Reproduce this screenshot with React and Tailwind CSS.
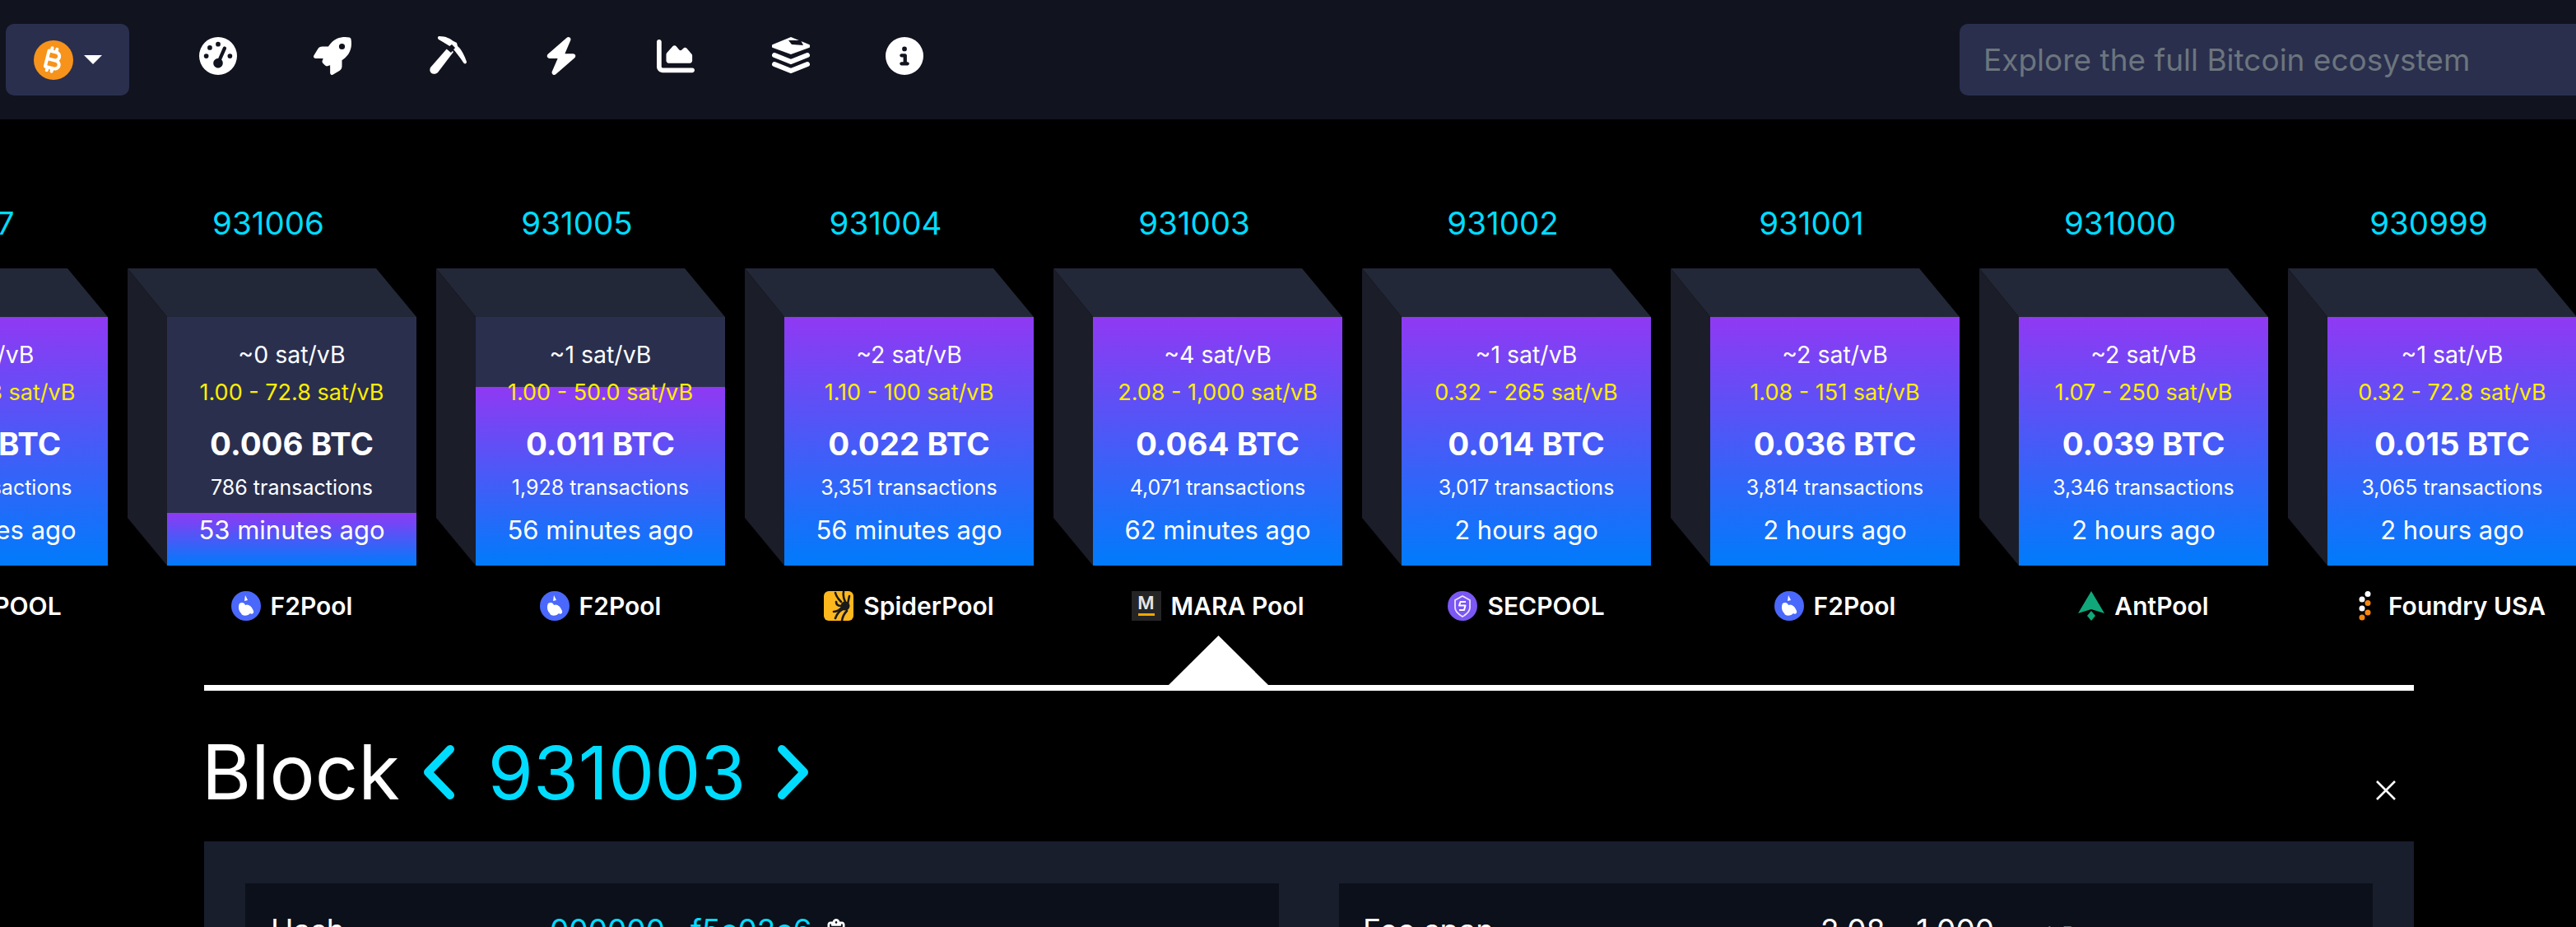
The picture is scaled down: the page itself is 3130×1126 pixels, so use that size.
import React from "react";
import { FaGaugeHigh, FaRocket, FaBolt, FaChartArea, FaCircleInfo, FaBitcoinSign, FaRegClipboard } from "react-icons/fa6";

const blocks = [
  { height: 931007, fee: "~1 sat/vB", span: "1.00 - 72.8 sat/vB", btc: "0.031 BTC", txs: "2,514 transactions", time: "50 minutes ago", pool: "SECPOOL", fill: 302 },
  { height: 931006, fee: "~0 sat/vB", span: "1.00 - 72.8 sat/vB", btc: "0.006 BTC", txs: "786 transactions", time: "53 minutes ago", pool: "F2Pool", fill: 64 },
  { height: 931005, fee: "~1 sat/vB", span: "1.00 - 50.0 sat/vB", btc: "0.011 BTC", txs: "1,928 transactions", time: "56 minutes ago", pool: "F2Pool", fill: 217 },
  { height: 931004, fee: "~2 sat/vB", span: "1.10 - 100 sat/vB", btc: "0.022 BTC", txs: "3,351 transactions", time: "56 minutes ago", pool: "SpiderPool", fill: 302 },
  { height: 931003, fee: "~4 sat/vB", span: "2.08 - 1,000 sat/vB", btc: "0.064 BTC", txs: "4,071 transactions", time: "62 minutes ago", pool: "MARA Pool", fill: 302 },
  { height: 931002, fee: "~1 sat/vB", span: "0.32 - 265 sat/vB", btc: "0.014 BTC", txs: "3,017 transactions", time: "2 hours ago", pool: "SECPOOL", fill: 302 },
  { height: 931001, fee: "~2 sat/vB", span: "1.08 - 151 sat/vB", btc: "0.036 BTC", txs: "3,814 transactions", time: "2 hours ago", pool: "F2Pool", fill: 302 },
  { height: 931000, fee: "~2 sat/vB", span: "1.07 - 250 sat/vB", btc: "0.039 BTC", txs: "3,346 transactions", time: "2 hours ago", pool: "AntPool", fill: 302 },
  { height: 930999, fee: "~1 sat/vB", span: "0.32 - 72.8 sat/vB", btc: "0.015 BTC", txs: "3,065 transactions", time: "2 hours ago", pool: "Foundry USA", fill: 302 },
];

function PickaxeIcon() {
  return (
    <svg width="48" height="47" viewBox="0 0 48 47" fill="white">
      <path d="M15 0C23 0 28 3 32 6L36 8L37 12C42 16 46 25 48 31C48 34 45 34 44 32C40 26 35 19 30 14C25 10 19 7 14 4C12 2 13 0 15 0Z" />
      <path d="M4 38L25 14L32 19L13 44C9 48 1 45 4 38Z" />
      <path d="M23 15L30 10L34 14L29 20Z" fill="#11131f" />
    </svg>
  );
}

function LayersIcon() {
  return (
    <svg width="46" height="46" viewBox="0 0 46 46" fill="none">
      <path d="M23 0L45 9C47 10 47 12 45 13L23 21L1 13C-1 12 -1 10 1 9Z" fill="white" />
      <path d="M20 4L35 4L38 10L24 9Z" fill="#11131f" />
      <path d="M3 22L23 30L43 22" stroke="white" strokeWidth="6" strokeLinecap="round" strokeLinejoin="round" />
      <path d="M3 33L23 41L43 33" stroke="white" strokeWidth="6" strokeLinecap="round" strokeLinejoin="round" />
    </svg>
  );
}

function PoolLogo({ name }) {
  if (name === "F2Pool") {
    return (
      <svg width="36" height="36" viewBox="0 0 36 36">
        <circle cx="18" cy="18" r="18" fill="#4a68fb" />
        <path d="M17 5L20 11L16 12Z" fill="white" />
        <path d="M10 15C13 13 16 14 17 17C20 15 25 18 27 24C28 27 25 29 23 27C21 30 13 31 12 27C9 24 8 19 10 15Z" fill="white" />
      </svg>
    );
  }
  if (name === "SpiderPool") {
    return (
      <svg width="36" height="36" viewBox="0 0 36 36" fill="none">
        <rect width="36" height="36" rx="6" fill="#fdb81e" />
        <g stroke="#1a1a1a" strokeWidth="2.6" strokeLinecap="round">
          <path d="M14 2C15 7 18 10 21 13" />
          <path d="M24 1C23 6 24 9 26 13" />
          <path d="M31 6C30 10 30 12 29 15" />
          <path d="M15 13C15 16 17 18 21 18" />
          <path d="M14 33C16 27 19 24 23 22" />
          <path d="M22 36C23 30 25 27 28 24" />
          <path d="M12 25C16 25 19 23 22 20" />
        </g>
        <circle cx="26" cy="18" r="5.5" fill="#1a1a1a" />
      </svg>
    );
  }
  if (name === "MARA Pool") {
    return (
      <div className="flex flex-col items-center w-[36px] h-[36px] bg-[#252525]">
        <span className="text-[22px] leading-[26px] font-semibold text-[#e6e6e6] mt-[1px]">M</span>
        <div className="w-[20px] h-[3px] bg-[#f7a600]" />
      </div>
    );
  }
  if (name === "SECPOOL") {
    return (
      <svg width="36" height="36" viewBox="0 0 36 36" fill="none">
        <circle cx="18" cy="18" r="18" fill="#7b57f5" />
        <path d="M18 6L27 11V20C27 25 23 28 18 31C13 28 9 25 9 20V11Z" stroke="white" strokeWidth="1.8" strokeOpacity="0.85" />
        <path d="M22 13H15.5L14 17.5H21.5L20 23H14" stroke="white" strokeWidth="2" strokeLinejoin="round" />
      </svg>
    );
  }
  if (name === "AntPool") {
    return (
      <svg width="32" height="36" viewBox="0 0 32 36">
        <path d="M16 0L32 27L16 22L0 27Z" fill="#10a87a" />
        <path d="M16 24L21 30L16 36L11 30Z" fill="#10a87a" />
      </svg>
    );
  }
  return (
    <svg width="16" height="36" viewBox="0 0 16 36" className="mr-[8px]">
      <circle cx="11" cy="3.5" r="3.5" fill="white" />
      <circle cx="4" cy="10" r="3.5" fill="white" />
      <circle cx="11" cy="14.5" r="3.5" fill="#f7860f" />
      <circle cx="4" cy="21" r="3.5" fill="white" />
      <circle cx="11" cy="26" r="3.5" fill="#f7860f" />
      <circle cx="4" cy="32" r="3.5" fill="#f7860f" />
    </svg>
  );
}

function Cube({ block }) {
  return (
    <div className="relative w-[351px] h-[361px]">
      <div className="h-[59px] bg-[#232838] [clip-path:polygon(0_0,302px_0,351px_59px,48px_59px)]" />
      <div className="absolute left-0 top-0 w-[48px] h-[361px] bg-[#1b1d29] [clip-path:polygon(0_0,48px_59px,48px_361px,0_303px)]" />
      <div className="relative ml-[48px] w-[303px] h-[302px] bg-[#2a2f4e] overflow-hidden">
        <div
          className="absolute inset-x-0 bottom-0 bg-[linear-gradient(#9039f3,#007bfb)]"
          style={{ height: block.fill }}
        />
        <div className="relative flex flex-col items-center text-white whitespace-nowrap">
          <div className="mt-[26px] h-[40px] leading-[40px] text-[28.5px]">{block.fee}</div>
          <div className="mt-[6px] h-[40px] leading-[40px] text-[27px] text-[#ffee00]">{block.span}</div>
          <div className="mt-[22px] h-[40px] leading-[40px] text-[38.5px] font-bold">{block.btc}</div>
          <div className="mt-[13px] h-[40px] leading-[40px] text-[25px]">{block.txs}</div>
          <div className="mt-[12px] h-[40px] leading-[40px] text-[31px]">{block.time}</div>
        </div>
      </div>
    </div>
  );
}

function BlockColumn({ block }) {
  return (
    <div className="shrink-0 w-[351px]">
      <div className="h-[50px] leading-[50px] pr-[9px] text-center text-[38.5px] text-[#00dcff]">{block.height}</div>
      <div className="mt-[30px]">
        <Cube block={block} />
      </div>
      <div className="mt-[31px] ml-[48px] h-[36px] flex items-center justify-center gap-[12px]">
        <PoolLogo name={block.pool} />
        <span className="text-[30px] font-semibold text-white whitespace-nowrap">{block.pool}</span>
      </div>
    </div>
  );
}

function Chevron({ flip }) {
  return (
    <svg width="39" height="66" viewBox="0 0 39 66" fill="none" className={flip ? "rotate-180" : ""}>
      <path d="M33 5L6 33L33 61" stroke="#00dcff" strokeWidth="10" strokeLinecap="round" strokeLinejoin="round" />
    </svg>
  );
}

export default function App() {
  const navIcons = [
    <FaGaugeHigh size={46} />,
    <FaRocket size={46} />,
    <PickaxeIcon />,
    <FaBolt size={46} />,
    <FaChartArea size={46} />,
    <div className="ml-[3px]"><LayersIcon /></div>,
    <FaCircleInfo size={46} />,
  ];

  return (
    <div className="w-[3130px] h-[1126px] overflow-hidden bg-black text-white font-['Inter',sans-serif]">
      <header className="h-[145px] bg-[#11131f] flex items-center pl-[7px]">
        <div className="w-[150px] h-[87px] rounded-[10px] bg-[#2a2f4e] flex items-center pl-[34px] gap-[13px]">
          <div className="w-[48px] h-[48px] rounded-full bg-[#f7931a] flex items-center justify-center">
            <FaBitcoinSign size={32} className="rotate-[14deg] text-white" />
          </div>
          <div className="w-[22px] h-[11px] bg-white [clip-path:polygon(0_0,100%_0,50%_100%)]" />
        </div>
        <nav className="flex ml-[38px] mb-[10px] text-white">
          {navIcons.map((icon, i) => (
            <div key={i} className="w-[139px] h-[48px] flex items-center justify-center">
              {icon}
            </div>
          ))}
        </nav>
        <div className="ml-auto w-[749px] h-[87px] rounded-l-[10px] bg-[#2a2f4e] flex items-center pl-[29px] text-[37px] text-[#6c757d]">
          Explore the full Bitcoin ecosystem
        </div>
      </header>

      <div className="flex gap-[24px] -ml-[220px] mt-[101px]">
        {blocks.map((b) => (
          <BlockColumn key={b.height} block={b} />
        ))}
      </div>

      <section className="ml-[248px] w-[2685px]">
        <div className="ml-[1172px] mt-[18px] w-[121px] h-[60px] bg-white [clip-path:polygon(50%_0,100%_100%,0_100%)]" />
        <div className="h-[7px] bg-white" />

        <div className="mt-[41px] h-[116px] flex items-center pr-[22px] whitespace-nowrap">
          <span className="-ml-[3px] text-[92px] leading-none">Block</span>
          <div className="ml-[28px]"><Chevron /></div>
          <span className="ml-[40px] text-[89px] leading-none text-[#00dcff]">931003</span>
          <div className="ml-[38px]"><Chevron flip /></div>
          <svg width="24" height="24" viewBox="0 0 24 24" className="ml-auto mt-[44px]" stroke="white" strokeWidth="2.6">
            <path d="M1 1L23 23M23 1L1 23" />
          </svg>
        </div>

        <div className="mt-[26px] bg-[#181e2c] pt-[51px] px-[50px] h-[300px] flex gap-[73px]">
          <div className="w-[1256px] bg-[#0c101a] flex text-[37px] leading-[40px] pt-[37px]">
            <div className="w-[341px] pl-[31px]">Hash</div>
            <div className="pl-[29px] flex items-center gap-[16px] h-[40px]">
              <span className="text-[#00dcff]">000000...f5c02c6</span>
              <FaRegClipboard size={28} />
            </div>
          </div>
          <div className="w-[1256px] bg-[#0c101a] flex text-[37px] leading-[40px] pt-[37px]">
            <div className="w-[553px] pl-[29px]">Fee span</div>
            <div className="pl-[32px] flex items-baseline gap-[26px]">
              <span>2.08 - 1,000</span>
              <span className="text-[24px] text-[#6c757d]">sat/vB</span>
            </div>
          </div>
        </div>
      </section>
    </div>
  );
}
